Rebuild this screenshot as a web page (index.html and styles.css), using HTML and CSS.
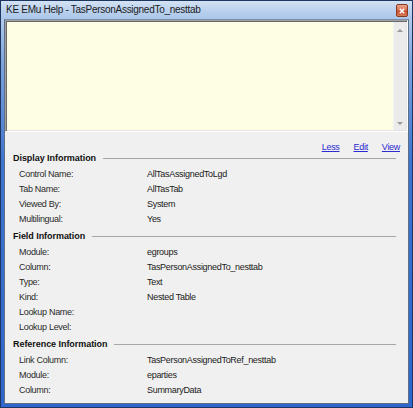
FILE: index.html
```html
<!DOCTYPE html>
<html>
<head>
<meta charset="utf-8">
<link rel="stylesheet" href="styles.css">
</head>
<body>
<div class="window">
  <div class="titlebar">
    <span class="title">KE EMu Help - TasPersonAssignedTo_nesttab</span>
    <span class="close"><svg width="6" height="6" viewBox="0 0 6 6"><path d="M0.8 0.8 L5.2 5.2 M5.2 0.8 L0.8 5.2" stroke="#fff" stroke-width="1.6"/></svg></span>
  </div>
  <div class="client">
    <div class="memo">
      <div class="memo-text"></div>
      <div class="vscroll">
        <span class="arr up"></span>
        <span class="arr down"></span>
      </div>
    </div>
    <div class="links"><a href="#">Less</a><a href="#">Edit</a><a href="#">View</a></div>
    <div class="section">
      <div class="hdr"><span>Display Information</span></div>
      <div class="row"><span class="lbl">Control Name:</span><span class="val">AllTasAssignedToLgd</span></div>
      <div class="row"><span class="lbl">Tab Name:</span><span class="val">AllTasTab</span></div>
      <div class="row"><span class="lbl">Viewed By:</span><span class="val">System</span></div>
      <div class="row"><span class="lbl">Multilingual:</span><span class="val">Yes</span></div>
    </div>
    <div class="section">
      <div class="hdr"><span>Field Information</span></div>
      <div class="row"><span class="lbl">Module:</span><span class="val">egroups</span></div>
      <div class="row"><span class="lbl">Column:</span><span class="val">TasPersonAssignedTo_nesttab</span></div>
      <div class="row"><span class="lbl">Type:</span><span class="val">Text</span></div>
      <div class="row"><span class="lbl">Kind:</span><span class="val">Nested Table</span></div>
      <div class="row"><span class="lbl">Lookup Name:</span><span class="val"></span></div>
      <div class="row"><span class="lbl">Lookup Level:</span><span class="val"></span></div>
    </div>
    <div class="section">
      <div class="hdr"><span>Reference Information</span></div>
      <div class="row"><span class="lbl">Link Column:</span><span class="val">TasPersonAssignedToRef_nesttab</span></div>
      <div class="row"><span class="lbl">Module:</span><span class="val">eparties</span></div>
      <div class="row"><span class="lbl">Column:</span><span class="val">SummaryData</span></div>
    </div>
  </div>
</div>
</body>
</html>
```
FILE: styles.css
```css
html, body {
  margin: 0;
  padding: 0;
  background: #ffffff;
}

.window {
  width: 413px;
  height: 408px;
  box-sizing: border-box;
  border: 1px solid #1d3660;
  background: linear-gradient(to bottom, #c6d9f0 0px, #b3cbea 18px, #7ea5df 60px, #3d74cf 160px, #2d66cc 100%);
  display: flex;
  flex-direction: column;
  font-family: "Liberation Sans", Arial, sans-serif;
}

.titlebar {
  height: 18px;
  flex: none;
  display: flex;
  align-items: flex-start;
  justify-content: space-between;
  background: linear-gradient(to bottom, #d3e2f4 0, #bcd2ee 50%, #aac6ea 100%);
}

.title {
  padding-left: 5px;
  line-height: 18px;
  font-size: 10px;
  letter-spacing: -0.28px;
  color: #1b1b1b;
}

.close {
  margin: 3px 4px 0 0;
  width: 12px;
  height: 13px;
  box-sizing: border-box;
  border: 1px solid #8a3a22;
  border-radius: 2px;
  background: linear-gradient(to bottom, #eba88e 0, #d9704e 45%, #c4502c 55%, #d77a55 100%);
  display: flex;
  align-items: center;
  justify-content: center;
}

.client {
  flex: 1;
  margin: 0 3px 3px 3px;
  background: #f0f0f0;
  border: 1px solid #5f6f86;
  border-top-color: #7d8ea8;
  display: flex;
  flex-direction: column;
  font-size: 9px;
  letter-spacing: -0.3px;
  color: #151515;
}

.memo {
  height: 112px;
  flex: none;
  box-sizing: border-box;
  border-top: 1px solid #a0a0a0;
  border-left: 1px solid #a0a0a0;
  border-right: 1px solid #ffffff;
  border-bottom: 1px solid #ffffff;
  box-shadow: inset 1px 1px 0 #696969, inset -1px -1px 0 #e3e3e3;
  display: flex;
  padding: 1px 1px 1px 1px;
}

.memo-text {
  flex: 1;
  background: #fefee4;
}

.vscroll {
  width: 12px;
  background: #ebebeb;
  border-left: 1px solid #f4f4f4;
  display: flex;
  flex-direction: column;
  justify-content: space-between;
  align-items: center;
  padding: 7px 0 5px 0;
}

.arr {
  width: 0;
  height: 0;
  border-left: 3px solid transparent;
  border-right: 3px solid transparent;
}

.arr.up {
  border-bottom: 3px solid #9a9a9a;
}

.arr.down {
  border-top: 3px solid #9a9a9a;
}

.links {
  display: flex;
  justify-content: flex-end;
  gap: 14px;
  padding: 9px 8px 0 0;
  line-height: 12px;
  height: 11px;
}

.links a {
  color: #2b2bd0;
  text-decoration: underline;
}

.section {
  padding-left: 8px;
  padding-right: 12px;
}

.section + .section {
  margin-top: 3px;
}

.hdr {
  display: flex;
  align-items: center;
  height: 12px;
  padding-bottom: 3px;
  font-weight: bold;
  letter-spacing: -0.05px;
  color: #111;
}

.hdr::after {
  content: "";
  flex: 1;
  margin-left: 7px;
  border-top: 1px solid #a6a6a6;
}

.row {
  display: flex;
  height: 15px;
  line-height: 15px;
  padding-left: 6px;
}

.lbl {
  width: 128px;
  flex: none;
  color: #2a2a2a;
}

.val {
  color: #1a1a1a;
}
```
